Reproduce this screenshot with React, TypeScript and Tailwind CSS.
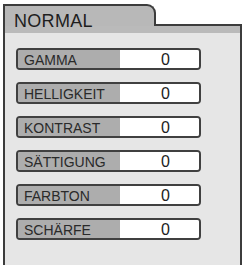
import React from 'react';

interface Setting {
  label: string;
  value: number;
}

const settings: Setting[] = [
  { label: 'GAMMA', value: 0 },
  { label: 'HELLIGKEIT', value: 0 },
  { label: 'KONTRAST', value: 0 },
  { label: 'SÄTTIGUNG', value: 0 },
  { label: 'FARBTON', value: 0 },
  { label: 'SCHÄRFE', value: 0 },
];

const SettingRow: React.FC<{ setting: Setting }> = ({ setting }) => (
  <div className="flex w-[185px] h-[22px] border-2 border-[#404040] rounded-[4px] overflow-hidden">
    <div className="w-[102px] bg-[#adadad] pl-[6px] pt-[1px] flex items-center text-[14px] text-[#2a2a2a] leading-none">
      {setting.label}
    </div>
    <div className="flex-1 bg-white flex items-center justify-center pl-[12px] pt-[1px] text-[16px] text-[#222] leading-none">
      {setting.value}
    </div>
  </div>
);

export default function App() {
  return (
    <div
      className="w-[243px] h-[265px] bg-white pt-[4px] pl-[3px] pr-[1px] overflow-hidden"
      style={{ fontFamily: '"Liberation Sans", Arial, sans-serif' }}
    >
      {/* Tab header */}
      <div className="flex items-end">
        <div className="w-[153px] h-[22px] bg-[#b8b8b8] border-2 border-b-0 border-[#3c3c3c] rounded-tr-[9px] pl-[9px] pt-[6px] text-[18px] tracking-[0.3px] leading-none text-[#1e1e1e]">
          NORMAL
        </div>
        <div className="flex-1 h-[2px] bg-[#3c3c3c]" />
      </div>

      {/* Grey strip under the tab */}
      <div className="h-[7px] bg-[#bababa] border-l-2 border-r-2 border-[#3c3c3c]" />

      {/* Settings panel */}
      <div className="h-[232px] bg-[#e6e6e6] border-l-2 border-r-2 border-[#3c3c3c] pt-[15px] pl-[11px] flex flex-col gap-[12px]">
        {settings.map((s) => (
          <SettingRow key={s.label} setting={s} />
        ))}
      </div>
    </div>
  );
}
